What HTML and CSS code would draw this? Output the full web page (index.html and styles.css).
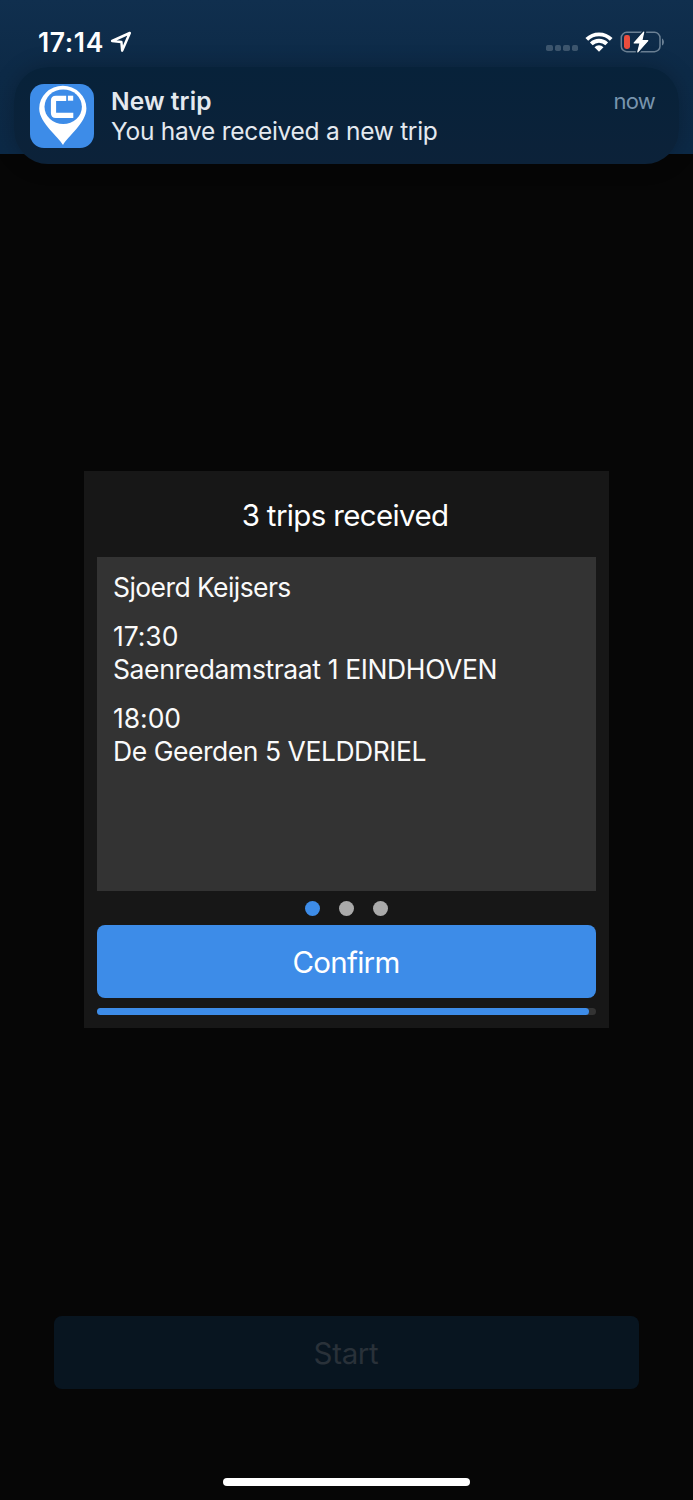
FILE: index.html
```html
<!DOCTYPE html>
<html lang="en">
<head>
<meta charset="utf-8">
<meta name="viewport" content="width=device-width">
<title>Trips</title>
<link rel="stylesheet" href="styles.css">
</head>
<body>
<div class="screen">
  <header class="header">
    <div class="status">
      <span class="clock">17:14</span>
      <svg class="location" width="22" height="22" viewBox="0 0 22 22"><path d="M2.1 10 19.8 2 12.2 19.6 11.4 11Z" fill="none" stroke="#fff" stroke-width="2.5" stroke-linejoin="round"/></svg>
      <div class="signal"><i></i><i></i><i></i><i></i></div>
      <svg class="wifi" width="28" height="22" viewBox="0 0 28 22"><g fill="none" stroke="#fff" stroke-width="3.9"><path d="M1.8 8.4A17.3 17.3 0 0 1 26.2 8.4"/><path d="M6.3 12.9A11 11 0 0 1 21.7 12.9"/></g><path d="M9.5 16.2A6.4 6.4 0 0 1 18.5 16.2L14 20.8Z" fill="#fff"/></svg>
      <svg class="battery" width="46" height="24" viewBox="0 0 46 24"><rect x="1.3" y="2.3" width="38.7" height="19.4" rx="5.5" fill="none" stroke="#6b8094" stroke-width="1.5"/><path d="M42 8.5C44.6 9.5 44.6 14.5 42 15.5Z" fill="#6b8094"/><path d="M24.2 1.9 14.5 13.3H19.7L17.7 22.1 28 10.3H22.2Z" fill="#fff" stroke="#0d2a46" stroke-width="4" stroke-linejoin="round"/><rect x="4" y="5" width="6" height="14" rx="2.4" fill="#eb4d3d"/><path d="M23.7 2.2 14.2 13H20.1L17.8 21.8 27.8 10.7H21.8Z" fill="#fff" stroke="#fff" stroke-width="1.2" stroke-linejoin="round"/></svg>
    </div>
  </header>

  <section class="banner">
    <svg class="app-icon" width="64" height="64" viewBox="0 0 64 64"><rect width="64" height="64" rx="14" fill="#3d8ce8"/><path d="M33 61C29 53 9.2 39 9.2 24.5A23.6 22.7 0 0 1 56.4 24.5C56.4 39 37 53 33 61Z" fill="#fff"/><ellipse cx="33.2" cy="22.8" rx="18.7" ry="17.3" fill="#3d8ce8"/><path d="M36.2 14.3H25.9Q23.5 14.3 23.5 16.7V28.9Q23.5 31.3 25.9 31.3H43.3" fill="none" stroke="#fff" stroke-width="5.2"/><rect x="37.9" y="11.7" width="5.3" height="5" fill="#fff"/></svg>
    <div class="banner-text">
      <div class="banner-top"><strong class="banner-title">New trip</strong><span class="banner-time">now</span></div>
      <p class="banner-message">You have received a new trip</p>
    </div>
  </section>

  <main class="content">
    <section class="dialog">
      <h1 class="dialog-title">3 trips received</h1>
      <div class="trip">
        <p class="name">Sjoerd Keijsers</p>
        <div class="stop"><p class="time">17:30</p><p class="pickup">Saenredamstraat 1 EINDHOVEN</p></div>
        <div class="stop"><p class="time">18:00</p><p class="dropoff">De Geerden 5 VELDDRIEL</p></div>
      </div>
      <div class="dots"><i class="dot active"></i><i class="dot"></i><i class="dot"></i></div>
      <button class="button confirm">Confirm</button>
      <div class="progress"><div class="progress-fill"></div></div>
    </section>
  </main>

  <footer class="footer">
    <button class="button start">Start</button>
    <div class="home"></div>
  </footer>
</div>
</body>
</html>
```
FILE: styles.css
```css
* { box-sizing: border-box; }
body { margin: 0; background: #060606; color: #fff; font-family: Inter, "Liberation Sans", sans-serif; }
p, h1 { margin: 0; font-weight: 400; white-space: nowrap; }
.screen { position: relative; display: flex; flex-direction: column; width: 693px; height: 1500px; overflow: hidden; background: #060606; }
.header { height: 154px; background: linear-gradient(#102f4e, #0d2a47 70px, #0c2946); }
.status { display: flex; align-items: center; height: 84px; padding: 0 27px 0 38px; }
.clock { width: 72px; padding-bottom: 1px; font-size: 26.5px; font-weight: 600; letter-spacing: 0.6px; }
.signal { display: flex; gap: 2.4px; margin: 12px 7px 0 auto; }
.signal i { width: 6.1px; height: 6.1px; border-radius: 1.7px; background: #3d566e; }
.battery { margin-left: 7px; }
.banner { position: absolute; top: 67px; left: 14px; display: flex; gap: 17px; width: 665px; height: 97px; padding: 17px 24px 0 16px; border-radius: 34px; background: linear-gradient(#07223a, #0c2239); box-shadow: 0 0 22px rgba(0, 0, 0, 0.22); color: #e4e9ef; }
.app-icon { flex: none; }
.banner-text { flex: 1; padding-top: 2px; }
.banner-top { display: flex; justify-content: space-between; line-height: 30px; }
.banner-title { font-size: 24.5px; font-weight: 600; letter-spacing: 0.1px; }
.banner-time { font-size: 22px; letter-spacing: -0.8px; color: #7894ad; }
.banner-message { font-size: 24.5px; line-height: 30px; letter-spacing: -0.28px; }
.content { padding: 317px 84px 0; }
.dialog { width: 525px; height: 557px; padding: 0 13px; background: #171717; }
.dialog-title { height: 86px; padding: 1px 3px 0 0; font-size: 29.5px; line-height: 86px; letter-spacing: -0.65px; text-align: center; }
.trip { display: flex; flex-direction: column; gap: 16px; height: 334px; padding: 14px 15px 14px 16px; background: #333; color: #fafafa; font-size: 26.5px; line-height: 33px; }
.name { letter-spacing: -0.58px; }
.time { letter-spacing: -0.05px; }
.pickup { letter-spacing: -0.38px; }
.dropoff { letter-spacing: -0.46px; }
.dots { display: flex; justify-content: center; gap: 19px; height: 34px; padding-top: 10px; }
.dot { width: 15px; height: 15px; border-radius: 50%; background: #aaa; }
.dot.active { background: #3d8ce8; }
.button { display: block; width: 100%; height: 73px; padding: 2px 1px 0 0; border: 0; border-radius: 8px; background: #3d8ce8; color: #fff; font-family: inherit; font-size: 29.5px; line-height: 71px; letter-spacing: -0.7px; }
.progress { height: 7px; margin-top: 10.4px; border-radius: 4px; background: #333; }
.progress-fill { width: 492px; height: 7px; border-radius: 4px; background: #3d8ce8; }
.footer { margin-top: 288px; padding: 0 54px; }
.start { background: #081520; color: #293139; letter-spacing: -0.35px; }
.home { width: 247px; height: 8px; margin: 89px auto 0; border-radius: 4px; background: #fff; }
```
